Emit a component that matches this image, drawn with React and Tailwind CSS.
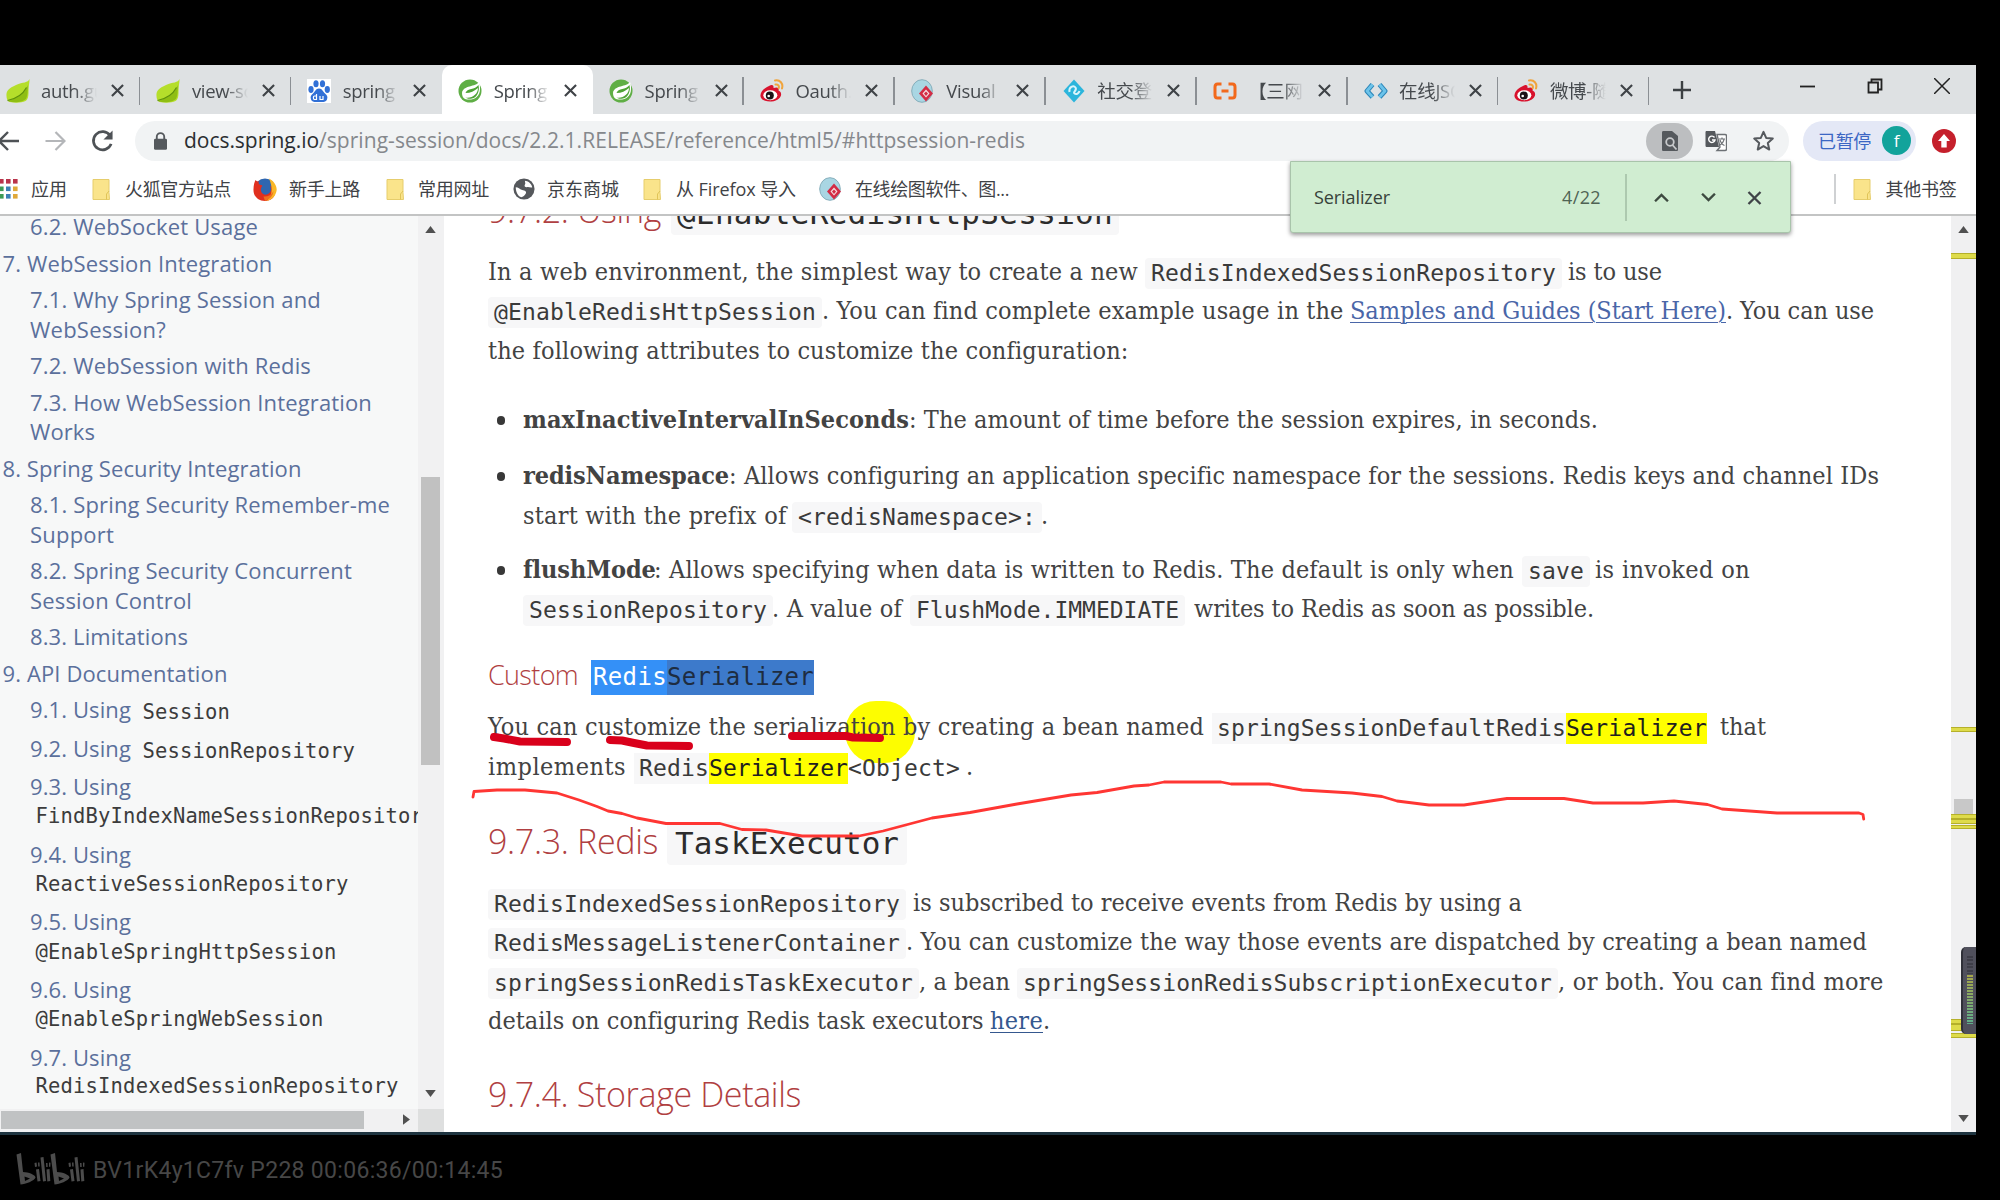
import { useLayoutEffect, useRef } from "react";

const UI = "font-['Open_Sans','Noto_Sans_CJK_SC',sans-serif]";
const SERIF = "font-['DejaVu_Serif_Condensed','DejaVu_Serif',serif] [font-stretch:condensed] text-[25px]";
const MONO = "font-['DejaVu_Sans_Mono',monospace]";

/* One run of text whose tracking is set so that it fills the width of its box. */
function T({ className = "", children }) {
  const box = useRef(null);
  const run = useRef(null);
  useLayoutEffect(() => {
    const s = getComputedStyle(box.current);
    const room = box.current.getBoundingClientRect().width - parseFloat(s.paddingLeft) - parseFloat(s.paddingRight);
    run.current.style.letterSpacing = "0px";
    const natural = run.current.getBoundingClientRect().width;
    const n = run.current.textContent.length;
    run.current.style.letterSpacing = `${(room - natural) / n}px`;
  });
  return (
    <span ref={box} className={`block shrink-0 whitespace-pre ${className}`}>
      <span ref={run}>{children}</span>
    </span>
  );
}

function Row({ className = "", children }) {
  return (
    <div className={`flex h-[39.500px] -translate-y-px items-baseline leading-[39.500px] text-[#434343] before:w-0 before:whitespace-pre before:content-['_'] ${SERIF} ${className}`}>
      {children}
    </div>
  );
}

function Code({ className = "", children }) {
  return <T className={`${MONO} translate-y-px rounded-[4px] bg-[#f7f7f8] px-[6px] text-[23px] leading-[31px] text-[#3a3a3a] ${className}`}>{children}</T>;
}

function Heading({ className = "", children }) {
  return (
    <div className={`flex h-[44px] items-baseline font-['Open_Sans',sans-serif] text-[34px] leading-[44px] font-light text-[#b03f42] ${className}`}>
      {children}
    </div>
  );
}

/* ---------- icons ---------- */
const Leaf = () => (
  <svg viewBox="0 0 24 24" className="h-6 w-6">
    <path d="M23.500 0C22 4 17 3 10 6 3 9 0 12 0.500 17c0 3 1 5 3 6 6 1 12 1 16-1 3-2 3-6 3-10 0-4 1-8 1-12z" fill="#b5de2b" />
    <path d="M1.500 22C9 20 18 16 22 6c-.5 6 0 10-2 14-5 4-12 4-18.500 2z" fill="#8fbe14" />
    <path d="M1.500 21.500C9 20 16 17 20.500 8.500" stroke="#5e8f0c" strokeWidth="1.200" fill="none" />
  </svg>
);
const Spring = () => (
  <svg viewBox="0 0 24 24" className="h-6 w-6">
    <circle cx="12" cy="12" r="11.5" fill="#5fae45" />
    <path d="M21 3C18 8 5 6 4 14c0 3 1 5 3 6 7 2 15-1 15-10 0-3 0-5-1-7z" fill="#fff" />
    <path d="M20.500 6C17 11 9 9 7.500 14c5 0 9-2 12.500-5 0 6-6 11-13 9.500 1 .5 4 2 7 1 5-1 8-7 6.500-13.500z" fill="#4fa336" />
  </svg>
);
const Baidu = () => (
  <svg viewBox="0 0 24 24" className="h-6 w-6 bg-white" fill="#3170d6">
    <ellipse cx="4" cy="10.500" rx="2.600" ry="3.400" />
    <ellipse cx="9" cy="4.700" rx="2.600" ry="3.500" />
    <ellipse cx="15.500" cy="4.700" rx="2.600" ry="3.500" />
    <ellipse cx="20.300" cy="10.500" rx="2.600" ry="3.400" />
    <path d="M12 9.500c3.500 0 4 3.500 6 5s3 3 2 6-4 2.500-8 2.500-7 .5-8-2.500 0-4.500 2-6 2.500-5 6-5z" />
    <path d="M9.500 15v5.500H7.500c-1.500 0-1.500-3.500 0-3.500h2M13 17v3.500h3V17" stroke="#fff" strokeWidth="1.200" fill="none" />
  </svg>
);
const Weibo = () => (
  <svg viewBox="0 0 24 24" className="h-6 w-6">
    <path d="M9 7c3-2 5-1 4.500 2 4-1.500 6 0 5 2.500 5 2 3 10-7 11C3 23 0 19 .5 16 1 12 5 8.500 9 7z" fill="#d8122d" />
    <ellipse cx="10.300" cy="16.300" rx="7" ry="5" fill="#fff" />
    <circle cx="9.800" cy="16.500" r="4" fill="#1b1216" />
    <circle cx="8.700" cy="17" r="1.300" fill="#fff" />
    <path d="M15 1.500c5-1 8.500 3 7 8M15.500 5.500c2.500-.5 4 1.500 3.200 3.700" stroke="#f0a43c" strokeWidth="2" fill="none" strokeLinecap="round" />
  </svg>
);
const Visual = () => (
  <svg viewBox="0 0 24 24" className="h-6 w-6">
    <ellipse cx="11" cy="12" rx="10.300" ry="11.300" fill="#a9d6e3" stroke="#86aebb" strokeWidth="1" />
    <path d="M15 6.500 22 14.500l-7 8-7-8z" fill="#d32c45" />
    <path d="M15 10.500 18.500 14.500l-3.500 4-3.500-4z" fill="#f6dfe2" />
    <path d="M15 12.500 17 14.500l-2 2.500-2-2.500z" fill="#d32c45" />
  </svg>
);
const Diamond = () => (
  <svg viewBox="0 0 24 24" className="h-6 w-6">
    <path d="M12 0.500 22.500 12 12 23.500 1.500 12z" fill="#2bb5dc" />
    <path d="M7.500 13c-1-5 4-7 6-4.500s-3 4.500-1 6 4.500-.5 5-2.500" stroke="#d8f4fb" strokeWidth="2" fill="none" />
  </svg>
);
const Brackets = () => (
  <svg viewBox="0 0 24 24" className="h-6 w-6" fill="none" stroke="#f2691c" strokeWidth="3">
    <path d="M8.500 5H4.500C2.500 5 2 6.500 2 8v8c0 2 .5 3 2.500 3h4M15.500 5h4C21.500 5 22 6.500 22 8v8c0 2-.5 3-2.500 3h-4M8.500 12h7" />
  </svg>
);
const Angles = () => (
  <svg viewBox="0 0 24 24" className="h-6 w-6" fill="none">
    <path d="M8.500 5.500 3 12l5.500 6M15.500 5.500 21 12l-5.500 6" stroke="#2d86b8" strokeWidth="5" strokeLinejoin="round" />
    <path d="M8.500 5.500 3 12l5.500 6M15.500 5.500 21 12l-5.500 6" stroke="#6cc3ea" strokeWidth="2.800" strokeLinejoin="round" />
  </svg>
);
const Cross = ({ className = "" }) => (
  <svg viewBox="0 0 14 14" className={className} stroke="#3f4347" strokeWidth="2.300" fill="none">
    <path d="M1 1l12 12M13 1 1 13" />
  </svg>
);
const Folder = () => (
  <svg viewBox="0 0 18 21" className="h-[21px] w-[18px]">
    <path d="M1 .5h16v13l.5 7H1z" fill="#fae48b" stroke="#e6cd6c" />
    <path d="M14.500 20.500V15l2.500-3" stroke="#e0c458" fill="none" />
  </svg>
);
const Apps = () => (
  <svg viewBox="0 0 18 20" className="h-[20px] w-[18px]">
    {["#b9344b", "#b9344b", "#b9344b", "#3d9a55", "#3b80b5", "#e0a93a", "#3d9a55", "#3b80b5", "#e0a93a"].map((c, i) => (
      <rect key={i} x={(i % 3) * 7 - 1} y={Math.floor(i / 3) * 7.5} width="4.600" height="4.600" fill={c} />
    ))}
  </svg>
);
const Firefox = () => (
  <svg viewBox="0 0 24 24" className="h-6 w-6">
    <circle cx="12" cy="12" r="10.500" fill="#2f66b0" />
    <path d="M2.500 3c1 1 2 1.500 3.500 1.500-1 2 0 3.500 3.500 4L8 11c-1 5 3 8 7 6 3-2 4-5 2-8 3 1 5 3 5 6C22 20.500 18 24 12 24 5 24 0 19 .5 12 .5 8 1.500 5 2.500 3z" fill="#e0301f" />
    <path d="M16 1.500c5 2.500 8.500 8 7.500 12.500-.8 5-5 9.300-10 9.800 5.500-4 7-12 2.500-22.300z" fill="#f9b727" />
    <path d="M12 23.900c5-2 8-5 8.500-10-2 4-6 6-10 5.500z" fill="#f0701f" />
  </svg>
);
const Globe = () => (
  <svg viewBox="0 0 24 24" className="h-[22px] w-[22px]">
    <circle cx="12" cy="12" r="11.500" fill="#55585c" />
    <path d="M13 3c3 0 7 3 8 7-2 1-4-1-6 0-2 0-3-1-2-3 1-1 0-2 0-4zM3 10c3 0 4 2 7 3 3 1 5 1 4 4-1 2-3 4-5 4-3-1-6-5-6-11z" fill="#fff" />
  </svg>
);
const Up = ({ className = "" }) => (
  <svg viewBox="0 0 12 8" className={`h-[7px] w-[11px] ${className}`}>
    <path d="M6 0l6 8H0z" fill="#505050" />
  </svg>
);

/* ---------- browser chrome ---------- */
const tabs = [
  { icon: <Leaf />, title: "auth.gu" },
  { icon: <Leaf />, title: "view-so" },
  { icon: <Baidu />, title: "spring" },
  { icon: <Spring />, title: "Spring", active: true },
  { icon: <Spring />, title: "Spring" },
  { icon: <Weibo />, title: "Oauth." },
  { icon: <Visual />, title: "Visual" },
  { icon: <Diamond />, title: "社交登" },
  { icon: <Brackets />, title: "【三网" },
  { icon: <Angles />, title: "在线JSO" },
  { icon: <Weibo />, title: "微博-随" },
];

function Tab({ icon, title, active, line }) {
  return (
    <div className={`flex h-[49px] w-[150.900px] shrink-0 items-center pt-[2px] pl-[16px] ${active ? "rounded-t-[10px] bg-white" : ""}`}>
      {icon}
      <span className="ml-[11.500px] w-[56px] overflow-hidden [mask-image:linear-gradient(to_right,black_60%,transparent)] text-[18.500px] tracking-[-0.3px] whitespace-nowrap text-[#45494d]">
        {title}
      </span>
      <Cross className="ml-[14px] h-[13px] w-[13px]" />
      {line && <span className="ml-auto h-[28px] w-[1.500px] bg-[#8b8f94]" />}
    </div>
  );
}

function TabStrip() {
  return (
    <div className="flex h-[49px] bg-[#dee1e3]">
      <div className="-ml-[10.500px] flex">
        {tabs.map((t, i) => (
          <Tab key={i} {...t} line={i !== 2 && i !== 3} />
        ))}
      </div>
      <svg viewBox="0 0 18 18" className="mt-[16px] ml-[24px] h-[18px] w-[18px]" stroke="#3c4043" strokeWidth="2.400">
        <path d="M9 0v18M0 9h18" />
      </svg>
      <div className="ml-auto flex pt-[13px] pr-[26px]">
        <svg viewBox="0 0 16 16" className="h-4 w-4" stroke="#222" strokeWidth="1.800"><path d="M0 8.500h15" /></svg>
        <svg viewBox="0 0 16 16" className="ml-[51px] h-4 w-4" stroke="#222" strokeWidth="1.800" fill="none">
          <path d="M1.500 4.500h9.500v10H1.500zM4.500 4V1.500h10v10H11.500" />
        </svg>
        <svg viewBox="0 0 16 16" className="ml-[51px] h-4 w-4" stroke="#222" strokeWidth="1.500"><path d="M0 0l16 16M16 0L0 16" /></svg>
      </div>
    </div>
  );
}

function AddressBar() {
  return (
    <div className="flex h-[53px] items-center bg-white">
      <svg viewBox="0 0 20 20" className="h-5 w-5" stroke="#4e5256" strokeWidth="2.400" fill="none"><path d="M19 10H0M8 1-1 10l9 9" /></svg>
      <svg viewBox="0 0 20 20" className="ml-[25px] h-5 w-[21px]" stroke="#b4b6b9" strokeWidth="2.200" fill="none"><path d="M0 10h19M10 1l9 9-9 9" /></svg>
      <svg viewBox="0 0 24 24" className="ml-[25px] h-[24px] w-[23px]" fill="none">
        <path d="M20 6.500A9.500 9.500 0 1 0 21 15" stroke="#4e5256" strokeWidth="2.800" />
        <path d="M22.500 1v9.500H13z" fill="#4e5256" />
      </svg>
      <div className="ml-[21px] flex h-[40px] w-[1654px] items-center rounded-full bg-[#f1f3f4] pl-[19px]">
        <svg viewBox="0 0 14 19" className="h-[18px] w-[13px]">
          <path d="M3 8V5a4 4 0 0 1 8 0v3" stroke="#55595d" strokeWidth="2" fill="none" />
          <rect y="7" width="14" height="12" rx="1.500" fill="#55595d" />
        </svg>
        <T className="ml-[17px] w-[135px] pt-px text-[21px] text-[#2b2e31]">docs.spring.io</T>
        <T className="w-[706px] pt-px text-[21px] text-[#85888c]">/spring-session/docs/2.2.1.RELEASE/reference/html5/#httpsession-redis</T>
        <span className="ml-[621px] flex h-[36px] w-[47px] items-center justify-center rounded-full bg-[#bcbec0]">
          <svg viewBox="0 0 16 20" className="h-[20px] w-[16px]">
            <path d="M0 1.500C0 .5.500 0 1.500 0H10l6 5v13.500c0 1-.5 1.500-1.500 1.500h-13C.5 20 0 19.500 0 18.500z" fill="#55595d" />
            <circle cx="8" cy="11" r="3.800" stroke="#c8cacc" strokeWidth="1.800" fill="none" />
            <path d="M10.500 14l4 4.500" stroke="#c8cacc" strokeWidth="1.800" />
          </svg>
        </span>
        <svg viewBox="0 0 22 22" className="ml-[12px] h-[22px] w-[22px]">
          <path d="M1 1h9l4 16H2c-1 0-1.500-.5-1.500-1.500v-13C.5 1.500 1 1 1 1z" fill="#55595d" />
          <path d="M12 4.500h8c1 0 1.500.5 1.500 1.500v13c0 1-.5 1.500-1.500 1.500h-8l3-3.500z" fill="#fff" stroke="#6d7175" strokeWidth="1.400" />
          <path d="M9.500 7.500A3.200 3.200 0 1 0 10 10H7" stroke="#fff" strokeWidth="1.400" fill="none" />
          <path d="M14 9h6M17 7.500V9M19 9c0 2-2 5-4 6M15 10c1 3 3 5 4.500 5.500" stroke="#6d7175" strokeWidth="1.200" fill="none" />
        </svg>
        <svg viewBox="0 0 24 24" className="ml-[25px] h-[24px] w-[23px]" fill="none" stroke="#55595d" strokeWidth="2.100" strokeLinejoin="round">
          <path d="M12 2.500l2.800 6.300 6.900.7-5.200 4.600 1.500 6.800-6-3.600-6 3.600 1.500-6.800L2.300 9.500l6.900-.7z" />
        </svg>
      </div>
      <div className="ml-[14px] flex h-[40px] w-[113px] items-center rounded-full bg-[#e4e8f6] pl-[15px]">
        <T className="w-[53px] pt-px text-[18px] text-[#3b66c4]">已暂停</T>
        <span className="ml-[11px] flex h-[29px] w-[29px] items-center justify-center rounded-full bg-[#12a39b] text-[17px] text-white">f</span>
      </div>
      <svg viewBox="0 0 24 24" className="ml-[16px] h-[24px] w-[24px]">
        <circle cx="12" cy="12" r="12" fill="#c5202c" />
        <path d="M12 5l6 7h-3.300v6.500H9.300V12H6z" fill="#fff" />
      </svg>
    </div>
  );
}

function Bookmarks() {
  return (
    <div className="flex h-[48px] items-center bg-white pb-[4px] text-[18px] text-[#3f4246]">
      <Apps />
      <T className="ml-[13px] w-[36px]">应用</T>
      <span className="ml-[25px]"><Folder /></span>
      <T className="ml-[15px] w-[106px]">火狐官方站点</T>
      <span className="ml-[22px]"><Firefox /></span>
      <T className="ml-[12px] w-[71px]">新手上路</T>
      <span className="ml-[26px]"><Folder /></span>
      <T className="ml-[14px] w-[71px]">常用网址</T>
      <span className="ml-[24px]"><Globe /></span>
      <T className="ml-[12px] w-[72px]">京东商城</T>
      <span className="ml-[24px]"><Folder /></span>
      <T className="ml-[15px] w-[120px]">从 Firefox 导入</T>
      <span className="ml-[23px]"><Visual /></span>
      <T className="ml-[12px] w-[154px]">在线绘图软件、图...</T>
      <span className="ml-[825px] h-[30px] w-[1.500px] bg-[#cfd1d3]" />
      <span className="ml-[17px]"><Folder /></span>
      <T className="ml-[15px] w-[71px]">其他书签</T>
    </div>
  );
}

function FindBar() {
  return (
    <div className="absolute top-[161px] left-[1290px] z-30 flex h-[72px] w-[501px] items-center rounded-b-[3px] border border-[#a9c4ab] bg-[#d0edd1] pt-px pl-[23px] text-[18px] text-[#37423a] shadow-[0_2px_4px_rgba(0,0,0,0.4)]">
      <T className="w-[76px]">Serializer</T>
      <T className="ml-[172px] w-[39px] text-[#4f6354]">4/22</T>
      <span className="ml-[24px] h-[47px] w-[1.500px] bg-[#adc9af]" />
      <svg viewBox="0 0 14 8" className="ml-[27px] h-[9px] w-[15px]" stroke="#3d4a40" strokeWidth="2.200" fill="none"><path d="M1 7.500 7 1.500l6 6" /></svg>
      <svg viewBox="0 0 14 8" className="ml-[32px] h-[9px] w-[15px]" stroke="#3d4a40" strokeWidth="2.200" fill="none"><path d="M1 .5l6 6 6-6" /></svg>
      <Cross className="ml-[31px] h-[14px] w-[15px]" />
    </div>
  );
}

/* ---------- table of contents ---------- */
function Toc({ l1, first, tight, className = "", children, code, codeClass = "" }) {
  return (
    <div className={`flex h-[29.400px] items-baseline leading-[29.400px] ${l1 ? "pl-[2.500px]" : "pl-[30px]"} ${first ? "-mt-[4px]" : tight ? "" : "mt-[7.200px]"}`}>
      {children && <T className={className}>{children}</T>}
      {code && <T className={`${MONO} text-[20.500px] text-[#3c3c3c] ${tight ? "translate-y-[1px]" : "translate-y-[0.500px]"} ${codeClass}`}>{code}</T>}
    </div>
  );
}

function Sidebar() {
  return (
    <div className="flex w-[444px] shrink-0 flex-col bg-[#f7f8f8]">
      <div className="flex h-[893px]">
        <div className="w-[418px] overflow-hidden font-['Open_Sans',sans-serif] text-[22px] text-[#5b709c]">
          <Toc first className="w-[228px]">6.2. WebSocket Usage</Toc>
          <Toc l1 className="w-[270px]">7. WebSession Integration</Toc>
          <Toc className="w-[291px]">7.1. Why Spring Session and</Toc>
          <Toc tight className="w-[136px]">WebSession?</Toc>
          <Toc className="w-[281px]">7.2. WebSession with Redis</Toc>
          <Toc className="w-[342px]">7.3. How WebSession Integration</Toc>
          <Toc tight className="w-[65px]">Works</Toc>
          <Toc l1 className="w-[299px]">8. Spring Security Integration</Toc>
          <Toc className="w-[360px]">8.1. Spring Security Remember-me</Toc>
          <Toc tight className="w-[84px]">Support</Toc>
          <Toc className="w-[322px]">8.2. Spring Security Concurrent</Toc>
          <Toc tight className="w-[162px]">Session Control</Toc>
          <Toc className="w-[158px]">8.3. Limitations</Toc>
          <Toc l1 className="w-[225px]">9. API Documentation</Toc>
          <Toc className="w-[101px]" code="Session" codeClass="ml-[11.500px] w-[87.500px]">9.1. Using</Toc>
          <div className="h-[1.700px]" />
          <Toc className="w-[101px]" code="SessionRepository" codeClass="ml-[11.500px] w-[212.500px]">9.2. Using</Toc>
          <div className="h-[1.700px]" />
          <Toc className="w-[101px]">9.3. Using</Toc>
          <Toc tight code="FindByIndexNameSessionRepository" codeClass="ml-[5.500px] w-[400px]" />
          <div className="h-[1.700px]" />
          <Toc className="w-[101px]">9.4. Using</Toc>
          <Toc tight code="ReactiveSessionRepository" codeClass="ml-[5.500px] w-[313px]" />
          <div className="h-[1.700px]" />
          <Toc className="w-[101px]">9.5. Using</Toc>
          <Toc tight code="@EnableSpringHttpSession" codeClass="ml-[5.500px] w-[301px]" />
          <div className="h-[1.700px]" />
          <Toc className="w-[101px]">9.6. Using</Toc>
          <Toc tight code="@EnableSpringWebSession" codeClass="ml-[5.500px] w-[288px]" />
          <div className="h-[1.700px]" />
          <Toc className="w-[101px]">9.7. Using</Toc>
          <Toc tight code="RedisIndexedSessionRepository" codeClass="-mt-px ml-[5.500px] w-[363px]" />
        </div>
        <div className="flex w-[26px] flex-col items-center bg-[#f1f1f2] pt-[10px] pr-[2px]">
          <Up />
          <div className="mt-[244px] h-[288px] w-[19px] shrink-0 bg-[#c1c1c1]" />
          <Up className="mt-[325px] rotate-180" />
        </div>
      </div>
      <div className="flex h-[23px] items-start bg-[#f1f1f2]">
        <div className="mt-[2px] ml-px h-[18px] w-[363px] bg-[#c0c2c3]" />
        <Up className="mt-[7px] ml-[37px] rotate-90" />
        <div className="ml-auto h-full w-[26px] bg-[#dedfdf]" />
      </div>
    </div>
  );
}

/* ---------- article ---------- */
const Bullet = () => <span className="mr-[18px] ml-[9px] h-[9px] w-[8px] shrink-0 -translate-y-[3px] rounded-full bg-[#383838]" />;
const HIT = "bg-[#ffff00] text-[#202020]";
const mono = `${MONO} translate-y-px text-[23px] leading-[31px] text-[#3a3a3a]`;

function Article() {
  return (
    <div className="min-w-0 flex-1 overflow-hidden pl-[44px]">
      <Heading className="-mt-[28px]">
        <T className="w-[173px]">9.7.2. Using</T>
        <T className={`${MONO} ml-[10px] w-[448px] translate-y-px rounded-[4px] bg-[#f7f7f8] px-[6px] text-[31px] leading-[43px] font-normal text-[#2c2c2c]`}>@EnableRedisHttpSession</T>
      </Heading>
      <Row className="mt-[20.500px]">
        <T className="w-[650px]">In a web environment, the simplest way to create a new</T>
        <Code className="ml-[7px] w-[417px]">RedisIndexedSessionRepository</Code>
        <T className="ml-[6px] w-[94px]">is to use</T>
      </Row>
      <Row>
        <Code className="w-[334px]">@EnableRedisHttpSession</Code>
        <T className="w-[521px]">. You can find complete example usage in the</T>
        <T className="ml-[7px] w-[376px] text-[#4a66a8] underline decoration-1 underline-offset-[3px]">Samples and Guides (Start Here)</T>
        <T className="w-[148px]">. You can use</T>
      </Row>
      <Row><T className="w-[640px]">the following attributes to customize the configuration:</T></Row>

      <Row className="mt-[30px]">
        <Bullet />
        <T className="w-[386px] font-bold">maxInactiveIntervalInSeconds</T>
        <T className="w-[689px]">: The amount of time before the session expires, in seconds.</T>
      </Row>
      <Row className="mt-[16.500px]">
        <Bullet />
        <T className="w-[206px] font-bold">redisNamespace</T>
        <T className="w-[1149px]">: Allows configuring an application specific namespace for the sessions. Redis keys and channel IDs</T>
      </Row>
      <Row className="pl-[35px]">
        <T className="w-[263px]">start with the prefix of</T>
        <Code className="ml-[6px] w-[250px]">{"<redisNamespace>:"}</Code>
        <T className="-ml-px w-[6px]">.</T>
      </Row>
      <Row className="mt-[14.500px]">
        <Bullet />
        <T className="w-[131px] font-bold">flushMode</T>
        <T className="w-[860px]">: Allows specifying when data is written to Redis. The default is only when</T>
        <Code className="ml-[8px] w-[68px]">save</Code>
        <T className="ml-[5px] w-[155px]">is invoked on</T>
      </Row>
      <Row className="pl-[35px]">
        <Code className="w-[250px]">SessionRepository</Code>
        <T className="-ml-px w-[130px]">. A value of</T>
        <Code className="ml-[8px] w-[275px]">FlushMode.IMMEDIATE</Code>
        <T className="ml-[9px] w-[400px]">writes to Redis as soon as possible.</T>
      </Row>

      <Heading className="mt-[25px] !h-[40px] !text-[27px] !leading-[40px]">
        <T className="w-[90px]">Custom</T>
        <T className={`${MONO} ml-[13px] w-[76px] bg-[#3490f7] pl-[2px] text-[24px] leading-[35px] font-normal text-white`}>Redis</T>
        <T className={`${MONO} w-[147px] bg-[#3d7acb] text-[24px] leading-[35px] font-normal text-[#1e2c40]`}>Serializer</T>
      </Heading>
      <Row className="mt-[13.500px]">
        <T className="w-[716px]">You can customize the serialization by creating a bean named</T>
        <T className={`${mono} ml-[8px] w-[354px] bg-[#f7f7f8] pl-[5px]`}>springSessionDefaultRedis</T>
        <T className={`${mono} w-[141px] ${HIT}`}>Serializer</T>
        <T className="ml-[13px] w-[46px]">that</T>
      </Row>
      <Row>
        <T className="w-[138px]">implements</T>
        <T className={`${mono} ml-[8px] w-[75px] bg-[#f7f7f8] pl-[5px]`}>Redis</T>
        <T className={`${mono} w-[139px] ${HIT}`}>Serializer</T>
        <T className={`${mono} w-[118px] pr-[6px]`}>{"<Object>"}</T>
        <T className="w-[6px]">.</T>
      </Row>

      <Heading className="mt-[32px]">
        <T className="w-[170px]">9.7.3. Redis</T>
        <T className={`${MONO} ml-[9px] w-[240px] rounded-[4px] bg-[#f7f7f8] px-[8px] text-[31px] leading-[43px] font-normal text-[#2c2c2c]`}>TaskExecutor</T>
      </Heading>
      <Row className="mt-[20.500px]">
        <Code className="w-[418px]">RedisIndexedSessionRepository</Code>
        <T className="ml-[7px] w-[609px]">is subscribed to receive events from Redis by using a</T>
      </Row>
      <Row>
        <Code className="w-[418px]">RedisMessageListenerContainer</Code>
        <T className="w-[961px]">. You can customize the way those events are dispatched by creating a bean named</T>
      </Row>
      <Row>
        <Code className="w-[431px]">springSessionRedisTaskExecutor</Code>
        <T className="w-[91px]">, a bean</T>
        <Code className="ml-[7px] w-[541px]">springSessionRedisSubscriptionExecutor</Code>
        <T className="w-[325px]">, or both. You can find more</T>
      </Row>
      <Row>
        <T className="w-[495px]">details on configuring Redis task executors</T>
        <T className="ml-[7px] w-[53px] text-[#35588f] underline decoration-1 underline-offset-[3px]">here</T>
        <T className="w-[6px]">.</T>
      </Row>
      <Heading className="mt-[30px]">
        <T className="w-[313px]">9.7.4. Storage Details</T>
      </Heading>
    </div>
  );
}

function PageScrollbar() {
  const marks = "w-full shrink-0 border-y border-[#b5b02a] bg-[#dedb4a]";
  return (
    <div className="flex w-[25px] shrink-0 flex-col items-center bg-[#f0f0f1] pt-[10px]">
      <Up />
      <div className={`mt-[20px] h-[6px] ${marks}`} />
      <div className={`mt-[468px] h-[5px] ${marks}`} />
      <div className="mt-[67px] h-[15px] w-[19px] bg-[#c8c8c8]" />
      <div className={`h-[5px] ${marks}`} />
      <div className={`h-[5px] ${marks}`} />
      <div className={`mt-[1px] h-[4px] ${marks}`} />
      <div className={`mt-[190px] h-[5px] ${marks}`} />
      <div className={`h-[7px] ${marks}`} />
      <div className={`mt-[2px] h-[5px] ${marks}`} />
      <Up className="mt-[77px] rotate-180" />
    </div>
  );
}

function Meter() {
  return (
    <div className="absolute top-[947px] left-[1961px] z-30 flex h-[87px] w-[15px] flex-col rounded-l-[5px] border-l-2 border-[#2f3038] bg-[#50505c] pt-[9px] pl-[4px]">
      <div className="h-[18px] w-[6px] bg-[repeating-linear-gradient(to_bottom,#3e3e48_0_2px,#50505c_2px_3.500px)]" />
      <div className="h-[50px] w-[6px] bg-[repeating-linear-gradient(to_bottom,#50505c_0_1px,transparent_1px_3px),linear-gradient(to_bottom,#a8a648,#5fae8c)]" />
    </div>
  );
}

function Marks() {
  return (
    <>
      <div className="absolute top-[701px] left-[845px] h-[62px] w-[70px] rounded-full bg-[#fdfd00]" />
      <svg viewBox="0 0 2000 1200" className="pointer-events-none absolute inset-0 z-20 h-[1200px] w-[2000px]" fill="none" strokeLinecap="round" strokeLinejoin="round">
        <g stroke="#d9001b" strokeWidth="8">
          <path d="M494 737 504 738.500 520 741.500 567 742" />
          <path d="M610 740 622 740.500 634 743 647 745.500 689 746" />
          <path d="M792 736H846L853 737.500 880 738" />
        </g>
        <path
          stroke="#ff3633"
          strokeWidth="2.800"
          d="M473 797 474 791.500 497 790H525L557 793 579 800 597 806.500 608 811 622 813.500 637 818 666 823.500H720L742 829.500 766 830 802 836H859L883 831 932 818 970 812.500 1017 804 1071 795 1097 792.500 1134 786 1149 785 1164 782H1221L1231 784H1269L1302 790 1352 793 1382 796.500 1397 801 1429 805H1464L1507 798.500H1564L1593 803H1643L1674 801 1707.500 804.500 1722 809 1777 813H1859L1863 814.500 1863.700 819"
        />
      </svg>
    </>
  );
}

const BiliHalf = ({ x }) => (
  <g transform={`translate(${x} 0)`}>
    <path d="M0 1.500 4.500 0 6.500 19C12 19 19 22 19 24.500 18 28 9 31 4 31.500zM8 23.500l.5 4.500 5-2.500z" fillRule="evenodd" />
    <path d="M19.500 16.500l3-.5 1.500 12-3 .5zM24 4.500l3-.5 2.500 24-3 .5zM30 16.500l3-.5 .8 12-3 .5z" />
    <path d="M18 10l2-.5.500 4-2 .5zM21.500 9.500l1.500 0 .2 4-1.500 0zM29.500 10l1.500 0 .2 4-1.500 0zM32.500 9.500l1.500.2-.2 4-1.300 0z" />
  </g>
);

export default function App() {
  return (
    <div className={`relative flex h-[1200px] w-[2000px] flex-col overflow-hidden bg-black pt-[65px] ${UI}`}>
      <div className="flex h-[1070px] w-[1976px] flex-col overflow-hidden border-b-[3px] border-[#1e3440] bg-white">
        <TabStrip />
        <AddressBar />
        <Bookmarks />
        <div className="-mt-px h-[2px] shrink-0 bg-[#c3c4c4]" />
        <div className="flex h-[916px] shrink-0">
          <Sidebar />
          <div className="relative z-10 flex min-w-0 flex-1">
            <Article />
            <PageScrollbar />
          </div>
        </div>
      </div>
      <div className="flex h-[65px] items-center gap-[8px] pt-[2px] pl-[16px] text-[#474747]">
        <svg viewBox="0 0 69 32" className="h-[32px] w-[69px]" fill="#4c4c4c">
          <BiliHalf x={0.5} />
          <BiliHalf x={34.5} />
        </svg>
        <T className="w-[410px] pt-[6px] font-['Roboto',sans-serif] text-[23px]">BV1rK4y1C7fv P228 00:06:36/00:14:45</T>
      </div>
      <Marks />
      <FindBar />
      <Meter />
    </div>
  );
}
